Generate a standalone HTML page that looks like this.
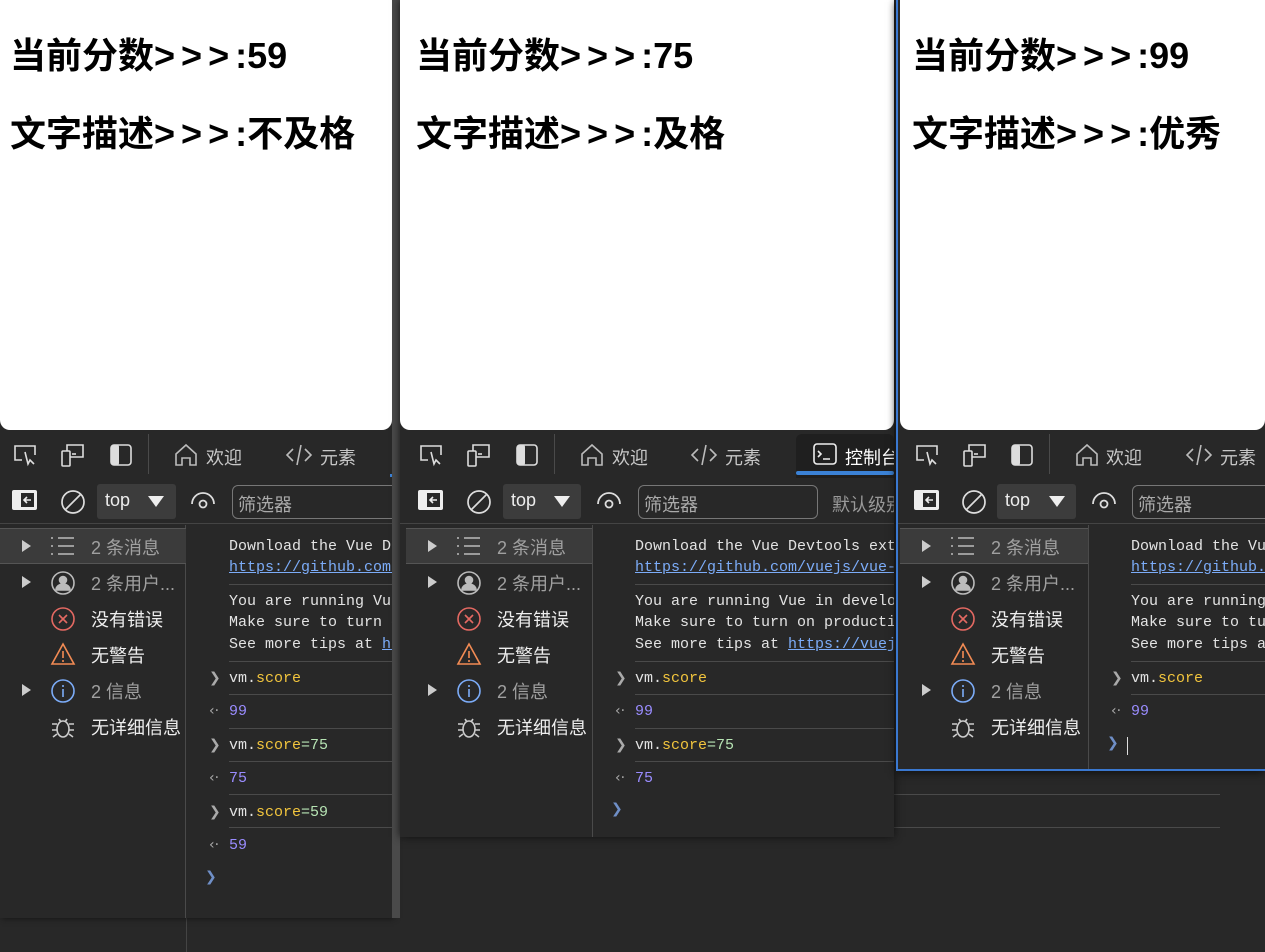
<!DOCTYPE html>
<html><head><meta charset="utf-8">
<style>
*{margin:0;padding:0;box-sizing:border-box}
body{width:1265px;height:952px;background:#282828;position:relative;overflow:hidden;font-family:"Liberation Sans","Noto Sans CJK SC",sans-serif;color:#e3e3e3}
.win{position:absolute;top:0;background:#282828;overflow:hidden}
.page{position:absolute;left:0;top:0;right:0;height:430px;background:#fff;border-radius:0 0 10px 10px}
.page h1{position:absolute;left:10px;font-size:36px;font-weight:bold;color:#000;white-space:nowrap;font-family:"Liberation Sans","Noto Sans CJK SC",sans-serif}
.page h1 b{letter-spacing:6px}
.tb1{position:absolute;left:0;right:0;top:430px;height:48px;background:#282828}
.tb2{position:absolute;left:0;right:0;top:478px;height:46px;background:#282828;border-bottom:1px solid #444}
.ab{position:absolute}
.t{position:absolute;font-size:18px;white-space:nowrap;color:#c7c7c7}
.side{position:absolute;left:0;top:525px;width:186px;bottom:0;border-right:1px solid #4a4a4a}
.con{position:absolute;left:187px;top:525px;right:0;bottom:0}
.m{position:absolute;font-family:"Liberation Mono","Noto Serif CJK SC",monospace;font-size:15px;white-space:nowrap;color:#e3e3e3}
.ln{position:absolute;left:42px;right:0;height:1px;background:#4a4a4a}
.lk{color:#7cacf8;text-decoration:underline}
.o{color:#f2c53d}.p{color:#9a8cff}.g{color:#b6e3b3}
.arr{position:absolute;left:22px;color:#aaa;font-family:"DejaVu Sans",sans-serif;font-size:14px}
.si{position:absolute;font-size:18px;white-space:nowrap}
</style></head><body>

<div style="position:absolute;left:186px;top:918px;width:1px;height:34px;background:#444"></div>
<div style="position:absolute;left:894px;top:794px;width:326px;height:1px;background:#4a4a4a"></div>
<div style="position:absolute;left:894px;top:827px;width:326px;height:1px;background:#4a4a4a"></div>

<!-- WINDOW 1 -->
<div class="win" style="left:0;width:392px;height:918px;box-shadow:2px 0 6px #111">
 <div class="page"><h1 style="top:27px">当前分数<b>&gt;&gt;&gt;</b>:59</h1><h1 style="top:105px">文字描述<b>&gt;&gt;&gt;</b>:不及格</h1></div>
 <div class="tb1">
  <svg class="ab" style="left:12px;top:13px" width="26" height="24" viewBox="0 0 26 24" fill="none" stroke="#ddd" stroke-width="1.6"><path d="M10 17H3V3h20v9"/><path d="M13 9l3 12 2-4 4 4"/></svg>
  <svg class="ab" style="left:60px;top:12px" width="26" height="26" viewBox="0 0 26 26" fill="none" stroke="#ddd" stroke-width="1.6"><rect x="2" y="9" width="8" height="15" rx="1"/><path d="M7 9V3h16v12H10"/><path d="M12 12h4"/></svg>
  <svg class="ab" style="left:110px;top:14px" width="22" height="22" viewBox="0 0 22 22"><rect x="1" y="1" width="20" height="20" rx="3" fill="none" stroke="#ddd" stroke-width="1.6"/><rect x="1" y="1" width="8" height="20" rx="2" fill="#ddd"/></svg>
  <div class="ab" style="left:148px;top:4px;width:1px;height:40px;background:#4a4a4a"></div>
  <svg class="ab" style="left:173px;top:12px" width="26" height="26" viewBox="0 0 26 26" fill="none" stroke="#bbb" stroke-width="1.6"><path d="M3 12L13 3l10 9v11h-6v-7h-8v7H3z"/></svg>
  <div class="t" style="left:206px;top:14px">欢迎</div>
  <svg class="ab" style="left:285px;top:13px" width="28" height="24" viewBox="0 0 28 24" fill="none" stroke="#bbb" stroke-width="1.6"><path d="M8 6l-6 6 6 6M20 6l6 6-6 6M16 2l-4 20"/></svg>
  <div class="t" style="left:320px;top:14px">元素</div>
  <div class="ab" style="left:390px;top:44px;width:6px;height:3px;background:#3b82d6"></div>
 </div>
 <div class="tb2">
  <svg class="ab" style="left:12px;top:12px" width="25" height="20" viewBox="0 0 25 20"><rect x="0" y="0" width="25" height="20" rx="2" fill="#eee"/><rect x="9" y="3" width="13" height="14" fill="#282828"/><path d="M19 10h-7m3-3l-3 3 3 3" stroke="#eee" stroke-width="1.6" fill="none"/></svg>
  <svg class="ab" style="left:60px;top:11px" width="26" height="26" viewBox="0 0 26 26" fill="none" stroke="#ddd" stroke-width="1.7"><circle cx="13" cy="13" r="11"/><path d="M5 21L21 5"/></svg>
  <div class="ab" style="left:97px;top:6px;width:79px;height:35px;background:#3c3c3c;border-radius:3px"></div>
  <div class="t" style="left:105px;top:12px;color:#eee">top</div>
  <div class="ab" style="left:148px;top:18px;width:0;height:0;border-left:8px solid transparent;border-right:8px solid transparent;border-top:11px solid #eee"></div>
  <svg class="ab" style="left:190px;top:14px" width="26" height="18" viewBox="0 0 26 18" fill="none" stroke="#ddd" stroke-width="1.8"><path d="M2 12a11 11 0 0 1 22 0"/><circle cx="13" cy="12" r="3.5"/></svg>
  <div class="ab" style="left:232px;top:7px;width:200px;height:34px;border:1px solid #777;border-radius:6px"></div>
  <div class="t" style="left:238px;top:13px;color:#aaa">筛选器</div>
 </div>
 <div class="side">
  <div class="ab" style="left:0;top:3px;width:186px;height:36px;background:#3b3b3b;border-top:1px solid #555;border-bottom:1px solid #555"></div>
  <div class="ab" style="left:22px;top:15px;border-top:6px solid transparent;border-bottom:6px solid transparent;border-left:9px solid #ccc"></div>
  <svg class="ab" style="left:50px;top:11px" width="26" height="20" viewBox="0 0 26 20" stroke="#bbb" stroke-width="1.6"><path d="M1 2h2M8 2h16M1 10h2M8 10h16M1 18h2M8 18h16"/></svg>
  <div class="si" style="left:91px;top:9px;color:#a0a0a0">2 条消息</div>
  <div class="ab" style="left:22px;top:51px;border-top:6px solid transparent;border-bottom:6px solid transparent;border-left:9px solid #ccc"></div>
  <svg class="ab" style="left:50px;top:45px" width="26" height="26" viewBox="0 0 26 26" fill="none" stroke="#bbb" stroke-width="1.6"><circle cx="13" cy="13" r="11"/><circle cx="13" cy="10" r="3.5" fill="#bbb"/><path d="M6 20a7 6 0 0 1 14 0z" fill="#bbb"/></svg>
  <div class="si" style="left:91px;top:45px;color:#a0a0a0">2 条用户...</div>
  <svg class="ab" style="left:50px;top:81px" width="26" height="26" viewBox="0 0 26 26" fill="none" stroke="#e46962" stroke-width="1.6"><circle cx="13" cy="13" r="11"/><path d="M9 9l8 8M17 9l-8 8"/></svg>
  <div class="si" style="left:91px;top:81px;color:#eee">没有错误</div>
  <svg class="ab" style="left:50px;top:117px" width="26" height="24" viewBox="0 0 26 24" fill="none" stroke="#f28b54" stroke-width="1.6"><path d="M13 2L24 22H2z"/><path d="M13 9v7M13 18v2"/></svg>
  <div class="si" style="left:91px;top:117px;color:#eee">无警告</div>
  <div class="ab" style="left:22px;top:159px;border-top:6px solid transparent;border-bottom:6px solid transparent;border-left:9px solid #ccc"></div>
  <svg class="ab" style="left:50px;top:153px" width="26" height="26" viewBox="0 0 26 26" fill="none" stroke="#7cacf8" stroke-width="1.6"><circle cx="13" cy="13" r="11"/><path d="M13 11v8M13 7v2"/></svg>
  <div class="si" style="left:91px;top:153px;color:#a0a0a0">2 信息</div>
  <svg class="ab" style="left:50px;top:189px" width="26" height="26" viewBox="0 0 26 26" fill="none" stroke="#ccc" stroke-width="1.6"><ellipse cx="13" cy="15" rx="6" ry="8"/><path d="M9 5l2 3M17 5l-2 3M2 10h5M19 10h5M2 16h5M19 16h5M3 23l4-3M23 23l-4-3"/></svg>
  <div class="si" style="left:91px;top:189px;color:#eee">无详细信息</div>
 </div>
 <div class="con">
  <div class="m" style="left:42px;top:13px">Download the Vue Devtools extension</div>
  <div class="m lk" style="left:42px;top:34px">https://github.com/vuejs/vue-devtools</div>
  <div class="ln" style="top:59px"></div>
  <div class="m" style="left:42px;top:68px">You are running Vue in development mode.</div>
  <div class="m" style="left:42px;top:89px">Make sure to turn on production mode</div>
  <div class="m" style="left:42px;top:111px">See more tips at <span class="lk">https://vuejs.org</span></div>
  <div class="ln" style="top:136px"></div>
  <div class="arr" style="top:145px">❯</div><div class="m" style="left:42px;top:145px">vm.<span class="o">score</span></div>
  <div class="ln" style="top:169px"></div>
  <div class="arr" style="top:178px">‹·</div><div class="m p" style="left:42px;top:178px">99</div>
  <div class="ln" style="top:203px"></div>
  <div class="arr" style="top:212px">❯</div><div class="m" style="left:42px;top:212px">vm.<span class="o">score</span><span class="g">=75</span></div>
  <div class="ln" style="top:236px"></div>
  <div class="arr" style="top:245px">‹·</div><div class="m p" style="left:42px;top:245px">75</div>
  <div class="ln" style="top:269px"></div>
  <div class="arr" style="top:279px">❯</div><div class="m" style="left:42px;top:279px">vm.<span class="o">score</span><span class="g">=59</span></div>
  <div class="ln" style="top:302px"></div>
  <div class="arr" style="top:312px">‹·</div><div class="m p" style="left:42px;top:312px">59</div>
  <div class="arr" style="top:344px;left:18px;color:#6f8fc7">❯</div>
 </div>
</div>
<div style="position:absolute;left:392px;top:0;width:8px;height:918px;background:#4a4a4a"></div>

<!-- WINDOW 2 -->
<div class="win" style="left:400px;width:494px;height:837px;box-shadow:0 0 8px #111">
 <div class="page"><h1 style="top:27px;left:16px">当前分数<b>&gt;&gt;&gt;</b>:75</h1><h1 style="top:105px;left:16px">文字描述<b>&gt;&gt;&gt;</b>:及格</h1></div>
 <div class="tb1">
  <svg class="ab" style="left:18px;top:13px" width="26" height="24" viewBox="0 0 26 24" fill="none" stroke="#ddd" stroke-width="1.6"><path d="M10 17H3V3h20v9"/><path d="M13 9l3 12 2-4 4 4"/></svg>
  <svg class="ab" style="left:66px;top:12px" width="26" height="26" viewBox="0 0 26 26" fill="none" stroke="#ddd" stroke-width="1.6"><rect x="2" y="9" width="8" height="15" rx="1"/><path d="M7 9V3h16v12H10"/><path d="M12 12h4"/></svg>
  <svg class="ab" style="left:116px;top:14px" width="22" height="22" viewBox="0 0 22 22"><rect x="1" y="1" width="20" height="20" rx="3" fill="none" stroke="#ddd" stroke-width="1.6"/><rect x="1" y="1" width="8" height="20" rx="2" fill="#ddd"/></svg>
  <div class="ab" style="left:154px;top:4px;width:1px;height:40px;background:#4a4a4a"></div>
  <svg class="ab" style="left:179px;top:12px" width="26" height="26" viewBox="0 0 26 26" fill="none" stroke="#bbb" stroke-width="1.6"><path d="M3 12L13 3l10 9v11h-6v-7h-8v7H3z"/></svg>
  <div class="t" style="left:212px;top:14px">欢迎</div>
  <svg class="ab" style="left:290px;top:13px" width="28" height="24" viewBox="0 0 28 24" fill="none" stroke="#bbb" stroke-width="1.6"><path d="M8 6l-6 6 6 6M20 6l6 6-6 6M16 2l-4 20"/></svg>
  <div class="t" style="left:325px;top:14px">元素</div>
  <div class="ab" style="left:396px;top:4px;width:98px;height:44px;background:#1f1f1f;border-radius:6px 6px 0 0"></div>
  <div class="ab" style="left:396px;top:41px;width:98px;height:4px;background:#3b82d6;border-radius:2px"></div>
  <svg class="ab" style="left:413px;top:13px" width="24" height="22" viewBox="0 0 24 22" fill="none" stroke="#eee" stroke-width="1.6"><rect x="1" y="1" width="22" height="20" rx="3"/><path d="M5 8l3 3-3 3M10 16h7"/></svg>
  <div class="t" style="left:445px;top:14px;color:#fff">控制台</div>
 </div>
 <div class="tb2">
  <svg class="ab" style="left:18px;top:12px" width="25" height="20" viewBox="0 0 25 20"><rect x="0" y="0" width="25" height="20" rx="2" fill="#eee"/><rect x="9" y="3" width="13" height="14" fill="#282828"/><path d="M19 10h-7m3-3l-3 3 3 3" stroke="#eee" stroke-width="1.6" fill="none"/></svg>
  <svg class="ab" style="left:66px;top:11px" width="26" height="26" viewBox="0 0 26 26" fill="none" stroke="#ddd" stroke-width="1.7"><circle cx="13" cy="13" r="11"/><path d="M5 21L21 5"/></svg>
  <div class="ab" style="left:103px;top:6px;width:78px;height:35px;background:#3c3c3c;border-radius:3px"></div>
  <div class="t" style="left:111px;top:12px;color:#eee">top</div>
  <div class="ab" style="left:154px;top:18px;width:0;height:0;border-left:8px solid transparent;border-right:8px solid transparent;border-top:11px solid #eee"></div>
  <svg class="ab" style="left:196px;top:14px" width="26" height="18" viewBox="0 0 26 18" fill="none" stroke="#ddd" stroke-width="1.8"><path d="M2 12a11 11 0 0 1 22 0"/><circle cx="13" cy="12" r="3.5"/></svg>
  <div class="ab" style="left:238px;top:7px;width:180px;height:34px;border:1px solid #777;border-radius:6px"></div>
  <div class="t" style="left:244px;top:13px;color:#aaa">筛选器</div>
  <div class="t" style="left:432px;top:13px;color:#999">默认级别</div>
 </div>
 <div class="side" style="left:6px;width:187px">
  <div class="ab" style="left:0;top:3px;width:186px;height:36px;background:#3b3b3b;border-top:1px solid #555;border-bottom:1px solid #555"></div>
  <div class="ab" style="left:22px;top:15px;border-top:6px solid transparent;border-bottom:6px solid transparent;border-left:9px solid #ccc"></div>
  <svg class="ab" style="left:50px;top:11px" width="26" height="20" viewBox="0 0 26 20" stroke="#bbb" stroke-width="1.6"><path d="M1 2h2M8 2h16M1 10h2M8 10h16M1 18h2M8 18h16"/></svg>
  <div class="si" style="left:91px;top:9px;color:#a0a0a0">2 条消息</div>
  <div class="ab" style="left:22px;top:51px;border-top:6px solid transparent;border-bottom:6px solid transparent;border-left:9px solid #ccc"></div>
  <svg class="ab" style="left:50px;top:45px" width="26" height="26" viewBox="0 0 26 26" fill="none" stroke="#bbb" stroke-width="1.6"><circle cx="13" cy="13" r="11"/><circle cx="13" cy="10" r="3.5" fill="#bbb"/><path d="M6 20a7 6 0 0 1 14 0z" fill="#bbb"/></svg>
  <div class="si" style="left:91px;top:45px;color:#a0a0a0">2 条用户...</div>
  <svg class="ab" style="left:50px;top:81px" width="26" height="26" viewBox="0 0 26 26" fill="none" stroke="#e46962" stroke-width="1.6"><circle cx="13" cy="13" r="11"/><path d="M9 9l8 8M17 9l-8 8"/></svg>
  <div class="si" style="left:91px;top:81px;color:#eee">没有错误</div>
  <svg class="ab" style="left:50px;top:117px" width="26" height="24" viewBox="0 0 26 24" fill="none" stroke="#f28b54" stroke-width="1.6"><path d="M13 2L24 22H2z"/><path d="M13 9v7M13 18v2"/></svg>
  <div class="si" style="left:91px;top:117px;color:#eee">无警告</div>
  <div class="ab" style="left:22px;top:159px;border-top:6px solid transparent;border-bottom:6px solid transparent;border-left:9px solid #ccc"></div>
  <svg class="ab" style="left:50px;top:153px" width="26" height="26" viewBox="0 0 26 26" fill="none" stroke="#7cacf8" stroke-width="1.6"><circle cx="13" cy="13" r="11"/><path d="M13 11v8M13 7v2"/></svg>
  <div class="si" style="left:91px;top:153px;color:#a0a0a0">2 信息</div>
  <svg class="ab" style="left:50px;top:189px" width="26" height="26" viewBox="0 0 26 26" fill="none" stroke="#ccc" stroke-width="1.6"><ellipse cx="13" cy="15" rx="6" ry="8"/><path d="M9 5l2 3M17 5l-2 3M2 10h5M19 10h5M2 16h5M19 16h5M3 23l4-3M23 23l-4-3"/></svg>
  <div class="si" style="left:91px;top:189px;color:#eee">无详细信息</div>
 </div>
 <div class="con" style="left:193px">
  <div class="m" style="left:42px;top:13px">Download the Vue Devtools extension</div>
  <div class="m lk" style="left:42px;top:34px">https://github.com/vuejs/vue-devtools</div>
  <div class="ln" style="top:59px"></div>
  <div class="m" style="left:42px;top:68px">You are running Vue in development mode.</div>
  <div class="m" style="left:42px;top:89px">Make sure to turn on production mode</div>
  <div class="m" style="left:42px;top:111px">See more tips at <span class="lk">https://vuejs.org</span></div>
  <div class="ln" style="top:136px"></div>
  <div class="arr" style="top:145px">❯</div><div class="m" style="left:42px;top:145px">vm.<span class="o">score</span></div>
  <div class="ln" style="top:169px"></div>
  <div class="arr" style="top:178px">‹·</div><div class="m p" style="left:42px;top:178px">99</div>
  <div class="ln" style="top:203px"></div>
  <div class="arr" style="top:212px">❯</div><div class="m" style="left:42px;top:212px">vm.<span class="o">score</span><span class="g">=75</span></div>
  <div class="ln" style="top:236px"></div>
  <div class="arr" style="top:245px">‹·</div><div class="m p" style="left:42px;top:245px">75</div>
  <div class="arr" style="top:276px;left:18px;color:#6f8fc7">❯</div>
 </div>
</div>

<!-- WINDOW 3 -->
<div class="win" style="left:896px;width:369px;height:771px;border:2px solid #3a78d0;border-right:none;border-top:none;box-shadow:0 2px 8px #111">
 <div class="page" style="left:2px"><h1 style="top:27px;left:12px">当前分数<b>&gt;&gt;&gt;</b>:99</h1><h1 style="top:105px;left:12px">文字描述<b>&gt;&gt;&gt;</b>:优秀</h1></div>
 <div class="tb1">
  <svg class="ab" style="left:16px;top:13px" width="26" height="24" viewBox="0 0 26 24" fill="none" stroke="#ddd" stroke-width="1.6"><path d="M10 17H3V3h20v9"/><path d="M13 9l3 12 2-4 4 4"/></svg>
  <svg class="ab" style="left:64px;top:12px" width="26" height="26" viewBox="0 0 26 26" fill="none" stroke="#ddd" stroke-width="1.6"><rect x="2" y="9" width="8" height="15" rx="1"/><path d="M7 9V3h16v12H10"/><path d="M12 12h4"/></svg>
  <svg class="ab" style="left:113px;top:14px" width="22" height="22" viewBox="0 0 22 22"><rect x="1" y="1" width="20" height="20" rx="3" fill="none" stroke="#ddd" stroke-width="1.6"/><rect x="1" y="1" width="8" height="20" rx="2" fill="#ddd"/></svg>
  <div class="ab" style="left:151px;top:4px;width:1px;height:40px;background:#4a4a4a"></div>
  <svg class="ab" style="left:176px;top:12px" width="26" height="26" viewBox="0 0 26 26" fill="none" stroke="#bbb" stroke-width="1.6"><path d="M3 12L13 3l10 9v11h-6v-7h-8v7H3z"/></svg>
  <div class="t" style="left:208px;top:14px">欢迎</div>
  <svg class="ab" style="left:287px;top:13px" width="28" height="24" viewBox="0 0 28 24" fill="none" stroke="#bbb" stroke-width="1.6"><path d="M8 6l-6 6 6 6M20 6l6 6-6 6M16 2l-4 20"/></svg>
  <div class="t" style="left:322px;top:14px">元素</div>
 </div>
 <div class="tb2">
  <svg class="ab" style="left:16px;top:12px" width="25" height="20" viewBox="0 0 25 20"><rect x="0" y="0" width="25" height="20" rx="2" fill="#eee"/><rect x="9" y="3" width="13" height="14" fill="#282828"/><path d="M19 10h-7m3-3l-3 3 3 3" stroke="#eee" stroke-width="1.6" fill="none"/></svg>
  <svg class="ab" style="left:63px;top:11px" width="26" height="26" viewBox="0 0 26 26" fill="none" stroke="#ddd" stroke-width="1.7"><circle cx="13" cy="13" r="11"/><path d="M5 21L21 5"/></svg>
  <div class="ab" style="left:99px;top:6px;width:79px;height:35px;background:#3c3c3c;border-radius:3px"></div>
  <div class="t" style="left:107px;top:12px;color:#eee">top</div>
  <div class="ab" style="left:151px;top:18px;width:0;height:0;border-left:8px solid transparent;border-right:8px solid transparent;border-top:11px solid #eee"></div>
  <svg class="ab" style="left:193px;top:14px" width="26" height="18" viewBox="0 0 26 18" fill="none" stroke="#ddd" stroke-width="1.8"><path d="M2 12a11 11 0 0 1 22 0"/><circle cx="13" cy="12" r="3.5"/></svg>
  <div class="ab" style="left:234px;top:7px;width:200px;height:34px;border:1px solid #777;border-radius:6px"></div>
  <div class="t" style="left:240px;top:13px;color:#aaa">筛选器</div>
 </div>
 <div class="side" style="left:2px;width:189px">
  <div class="ab" style="left:0;top:3px;width:188px;height:36px;background:#3b3b3b;border-top:1px solid #555;border-bottom:1px solid #555"></div>
  <div class="ab" style="left:22px;top:15px;border-top:6px solid transparent;border-bottom:6px solid transparent;border-left:9px solid #ccc"></div>
  <svg class="ab" style="left:50px;top:11px" width="26" height="20" viewBox="0 0 26 20" stroke="#bbb" stroke-width="1.6"><path d="M1 2h2M8 2h16M1 10h2M8 10h16M1 18h2M8 18h16"/></svg>
  <div class="si" style="left:91px;top:9px;color:#a0a0a0">2 条消息</div>
  <div class="ab" style="left:22px;top:51px;border-top:6px solid transparent;border-bottom:6px solid transparent;border-left:9px solid #ccc"></div>
  <svg class="ab" style="left:50px;top:45px" width="26" height="26" viewBox="0 0 26 26" fill="none" stroke="#bbb" stroke-width="1.6"><circle cx="13" cy="13" r="11"/><circle cx="13" cy="10" r="3.5" fill="#bbb"/><path d="M6 20a7 6 0 0 1 14 0z" fill="#bbb"/></svg>
  <div class="si" style="left:91px;top:45px;color:#a0a0a0">2 条用户...</div>
  <svg class="ab" style="left:50px;top:81px" width="26" height="26" viewBox="0 0 26 26" fill="none" stroke="#e46962" stroke-width="1.6"><circle cx="13" cy="13" r="11"/><path d="M9 9l8 8M17 9l-8 8"/></svg>
  <div class="si" style="left:91px;top:81px;color:#eee">没有错误</div>
  <svg class="ab" style="left:50px;top:117px" width="26" height="24" viewBox="0 0 26 24" fill="none" stroke="#f28b54" stroke-width="1.6"><path d="M13 2L24 22H2z"/><path d="M13 9v7M13 18v2"/></svg>
  <div class="si" style="left:91px;top:117px;color:#eee">无警告</div>
  <div class="ab" style="left:22px;top:159px;border-top:6px solid transparent;border-bottom:6px solid transparent;border-left:9px solid #ccc"></div>
  <svg class="ab" style="left:50px;top:153px" width="26" height="26" viewBox="0 0 26 26" fill="none" stroke="#7cacf8" stroke-width="1.6"><circle cx="13" cy="13" r="11"/><path d="M13 11v8M13 7v2"/></svg>
  <div class="si" style="left:91px;top:153px;color:#a0a0a0">2 信息</div>
  <svg class="ab" style="left:50px;top:189px" width="26" height="26" viewBox="0 0 26 26" fill="none" stroke="#ccc" stroke-width="1.6"><ellipse cx="13" cy="15" rx="6" ry="8"/><path d="M9 5l2 3M17 5l-2 3M2 10h5M19 10h5M2 16h5M19 16h5M3 23l4-3M23 23l-4-3"/></svg>
  <div class="si" style="left:91px;top:189px;color:#eee">无详细信息</div>
 </div>
 <div class="con" style="left:191px">
  <div class="m" style="left:42px;top:13px">Download the Vue Devtools extension</div>
  <div class="m lk" style="left:42px;top:34px">https://github.com/vuejs/vue-devtools</div>
  <div class="ln" style="top:59px"></div>
  <div class="m" style="left:42px;top:68px">You are running Vue in development mode.</div>
  <div class="m" style="left:42px;top:89px">Make sure to turn on production mode</div>
  <div class="m" style="left:42px;top:111px">See more tips at <span class="lk">https://vuejs.org</span></div>
  <div class="ln" style="top:136px"></div>
  <div class="arr" style="top:145px">❯</div><div class="m" style="left:42px;top:145px">vm.<span class="o">score</span></div>
  <div class="ln" style="top:169px"></div>
  <div class="arr" style="top:178px">‹·</div><div class="m p" style="left:42px;top:178px">99</div>
  <div class="arr" style="top:210px;left:18px;color:#6f8fc7">❯</div>
  <div class="ab" style="left:38px;top:212px;width:1px;height:18px;background:#ddd"></div>
 </div>
</div>
</body></html>
